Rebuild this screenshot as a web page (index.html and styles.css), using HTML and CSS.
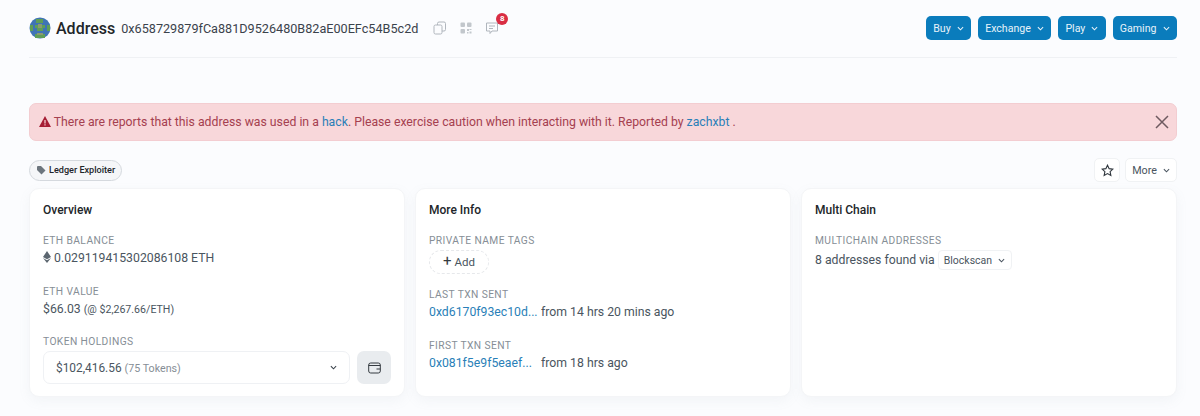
FILE: index.html
```html
<!DOCTYPE html>
<html lang="en">

<head>
    <meta charset="UTF-8">
    <title>Address</title>
    <link rel="stylesheet" href="styles.css">
</head>

<body>
    <div class="header">
        <div class="title">
            <svg class="avatar" width="22" height="22" viewBox="0 0 22 22">
                <circle cx="11" cy="11" r="10.500" fill="#3f74b5" />
                <path d="M7 2h7v4H7zM6 8h3v3H6zM13 8h3v3h-3zM8 11h6v3H8zM1 8h3v6H1zM18 8h3v6h-3zM6 17h10v4H6z" fill="#5f9e57" />
                <path d="M9 7h4v4H9zM8 16h6v2H8z" fill="#8a9a72" />
            </svg>
            <h1>Address</h1>
            <span class="hash">0x658729879fCa881D9526480B82aE00EFc54B5c2d</span>
            <svg class="tool" width="14" height="14" viewBox="0 0 14 14">
                <rect x="4.500" y="1" width="8" height="9" rx="1.500" />
                <rect x="1" y="4" width="8" height="9" rx="1.500" fill="#fbfcfe" />
            </svg>
            <svg class="tool solid" width="14" height="14" viewBox="0 0 14 14">
                <rect x="1.500" y="1.500" width="4.500" height="4.500" rx="1" />
                <rect x="8" y="1.500" width="4.500" height="4.500" rx="1" />
                <rect x="1.500" y="8" width="4.500" height="4.500" rx="1" />
                <path d="M8 8h2v2H8zM10.500 10.500h2v2h-2zM10.500 8h2v1h-2zM8 11h1.500v1.500H8z" />
            </svg>
            <span class="notes">
                <svg class="tool" width="14" height="14" viewBox="0 0 14 14">
                    <path d="M1.500 2h11v8H7l-2 2.500V10H1.500z" />
                    <path d="M4 5h6M4 7.500h4" />
                </svg>
                <span class="badge">8</span>
            </span>
        </div>
        <div class="menu">
            <button class="blue">Buy<svg class="chev" width="8" height="5" viewBox="0 0 8 5"><path d="M1 1l3 3 3-3" /></svg></button>
            <button class="blue">Exchange<svg class="chev" width="8" height="5" viewBox="0 0 8 5"><path d="M1 1l3 3 3-3" /></svg></button>
            <button class="blue">Play<svg class="chev" width="8" height="5" viewBox="0 0 8 5"><path d="M1 1l3 3 3-3" /></svg></button>
            <button class="blue">Gaming<svg class="chev" width="8" height="5" viewBox="0 0 8 5"><path d="M1 1l3 3 3-3" /></svg></button>
        </div>
    </div>

    <div class="alert">
        <p>
            <svg class="warn" width="12" height="11" viewBox="0 0 12 11">
                <path d="M6 0l6 11H0z" fill="#a61e35" />
                <path d="M5.400 4h1.200v3.500H5.400zM5.400 8.200h1.200v1.200H5.400z" fill="#f8d7da" />
            </svg>
            There are reports that this address was used in a <a>hack</a>. Please exercise caution when interacting with it. Reported by <a>zachxbt</a> .
        </p>
        <svg class="close" width="14" height="14" viewBox="0 0 14 14"><path d="M1 1l12 12M13 1L1 13" /></svg>
    </div>

    <div class="tags">
        <span class="tag">
            <svg width="10" height="10" viewBox="0 0 10 10"><path d="M0 1.500V5l4.500 4.500 4-4L4 1H.5z" fill="#6c757d" /></svg>
            Ledger Exploiter
        </span>
        <div class="actions">
            <button class="white star">
                <svg width="13" height="13" viewBox="0 0 14 14"><path d="M7 1.300l1.750 3.700 4 .5-2.950 2.800.8 4L7 10.300 3.400 12.300l.8-4L1.250 5.500l4-.5z" /></svg>
            </button>
            <button class="white">More<svg class="chev" width="8" height="5" viewBox="0 0 8 5"><path d="M1 1l3 3 3-3" /></svg></button>
        </div>
    </div>

    <div class="cards">
        <div class="card">
            <h2>Overview</h2>
            <div class="label">ETH BALANCE</div>
            <div class="value">
                <svg width="8" height="12" viewBox="0 0 8 12"><path d="M4 0l4 6-4 2.300L0 6zM0 7l4 2.300L8 7l-4 5z" fill="#5c6670" /></svg>
                0.029119415302086108 ETH
            </div>
            <div class="label">ETH VALUE</div>
            <div class="value">$66.03 <span class="small">(@ $2,267.66/ETH)</span></div>
            <div class="label">TOKEN HOLDINGS</div>
            <div class="holdings">
                <div class="select">
                    <span>$102,416.56 <span class="muted">(75 Tokens)</span></span>
                    <svg class="chev dark" width="8" height="5" viewBox="0 0 8 5"><path d="M1 1l3 3 3-3" /></svg>
                </div>
                <button class="wallet">
                    <svg width="13" height="12" viewBox="0 0 13 12">
                        <rect x=".7" y="1" width="11.600" height="10" rx="2" />
                        <path d="M.7 3.500h11.600M8.500 7h3.800" />
                    </svg>
                </button>
            </div>
        </div>
        <div class="card info">
            <h2>More Info</h2>
            <div class="label">PRIVATE NAME TAGS</div>
            <button class="add"><span class="plus">+</span> Add</button>
            <div class="label">LAST TXN SENT</div>
            <div class="value"><a class="txn">0xd6170f93ec10d...</a> from 14 hrs 20 mins ago</div>
            <div class="label">FIRST TXN SENT</div>
            <div class="value"><a class="txn">0x081f5e9f5eaef...</a> from 18 hrs ago</div>
        </div>
        <div class="card">
            <h2>Multi Chain</h2>
            <div class="label">MULTICHAIN ADDRESSES</div>
            <div class="value found">8 addresses found via
                <button class="white scan">Blockscan<svg class="chev" width="8" height="5" viewBox="0 0 8 5"><path d="M1 1l3 3 3-3" /></svg></button>
            </div>
        </div>
    </div>
</body>

</html>
```

FILE: styles.css
```css
* {
    margin: 0;
    padding: 0;
    box-sizing: border-box;
}

body {
    height: 416px;
    overflow: hidden;
    padding: 0 23px 0 29px;
    background-color: #fbfcfe;
    font-family: Roboto, "Liberation Sans", sans-serif;
    font-size: 12.250px;
    color: #4a5560;
}

button {
    font-family: inherit;
    border: none;
}

a {
    color: #2a7fb8;
}

.header {
    height: 58px;
    display: flex;
    justify-content: space-between;
    align-items: center;
    padding-bottom: 1px;
    border-bottom: solid 1px #eff1f4;
}

.title {
    display: flex;
    align-items: center;
}

.avatar {
    margin-right: 5px;
}

h1 {
    font-size: 16px;
    font-weight: 500;
    color: #212529;
    margin-right: 6px;
}

.hash {
    font-size: 12.650px;
    color: #3a424b;
    margin-right: 15px;
}

.tool {
    fill: none;
    stroke: #b0b6bd;
    stroke-width: 1;
    margin-right: 12px;
}

.tool.solid {
    fill: #c2c7cc;
    stroke: none;
}

.notes {
    position: relative;
    display: flex;
}

.badge {
    position: absolute;
    top: -8px;
    left: 11px;
    width: 12px;
    height: 12px;
    border-radius: 50%;
    background-color: #d92d43;
    color: #fff;
    font-size: 8px;
    font-weight: 700;
    line-height: 12px;
    text-align: center;
}

.menu {
    display: flex;
    gap: 7px;
}

.blue {
    height: 24px;
    padding: 0 7.500px 0 7px;
    display: flex;
    align-items: center;
    gap: 6px;
    border-radius: 5px;
    background-color: #0a7cbc;
    color: #e8f3fa;
    font-size: 10.600px;
}

.blue .chev,
.white .chev,
.select .chev {
    width: 7px;
}

.chev {
    fill: none;
    stroke: currentColor;
    stroke-width: 1.200;
}

.chev.dark {
    stroke: #3a424b;
}

.alert {
    height: 38px;
    margin-top: 45px;
    padding: 0 7px 0 9px;
    display: flex;
    justify-content: space-between;
    align-items: center;
    background-color: #f8d7da;
    border: solid 1px #f3cdd1;
    border-radius: 7px;
    color: #a5404f;
    font-size: 12.250px;
}

.warn {
    vertical-align: -1px;
}

.close {
    fill: none;
    stroke: #6e5a60;
    stroke-width: 1.500;
}

.tags {
    height: 24px;
    margin-top: 17px;
    display: flex;
    justify-content: space-between;
    align-items: center;
}

.tag {
    height: 21px;
    padding: 0 6px 0 7px;
    display: flex;
    align-items: center;
    gap: 2px;
    border: solid 1px #d5d9de;
    border-radius: 11px;
    background-color: #f5f6f8;
    color: #212529;
    font-size: 9.100px;
    font-weight: 500;
}

.actions {
    display: flex;
    gap: 5px;
}

.white {
    height: 24px;
    display: flex;
    align-items: center;
    gap: 6px;
    padding: 0 6px;
    border: solid 1px #f0f2f4;
    border-radius: 5px;
    background-color: #fff;
    color: #4a5560;
    font-size: 10.750px;
}

.star {
    width: 26px;
    justify-content: center;
    padding: 0;
}

.star svg {
    fill: none;
    stroke: #2f363d;
    stroke-width: 1.200;
}

.cards {
    margin-top: 6px;
    display: flex;
    gap: 10px;
}

.card {
    width: 376px;
    height: 209px;
    padding: 14px 13px;
    background-color: #fff;
    border: solid 1px #f4f5f7;
    border-radius: 10px;
    box-shadow: 0 4px 12px rgba(140, 152, 164, .08);
}

h2 {
    font-size: 12px;
    font-weight: 500;
    line-height: 14px;
    color: #212529;
    margin-bottom: 18px;
}

.label {
    font-size: 10.250px;
    letter-spacing: .4px;
    line-height: 12px;
    color: #868e96;
    margin-bottom: 3px;
}

.value {
    line-height: 17px;
    margin-bottom: 18.700px;
}

.info .value {
    margin-bottom: 18.500px;
}

.value svg {
    vertical-align: -1px;
}

.small {
    font-size: 10.600px;
}

.holdings {
    display: flex;
    gap: 7px;
}

.select {
    flex: 1;
    height: 33px;
    padding: 0 12px;
    display: flex;
    justify-content: space-between;
    align-items: center;
    border: solid 1px #eff1f4;
    border-radius: 7px;
    font-size: 11.900px;
}

.muted {
    font-size: 10.700px;
    color: #868e96;
}

.wallet {
    width: 34px;
    height: 33px;
    display: flex;
    justify-content: center;
    align-items: center;
    border-radius: 7px;
    background-color: #e9ecef;
}

.wallet svg {
    fill: none;
    stroke: #343a40;
    stroke-width: 1;
}

.add {
    display: block;
    width: 60px;
    height: 24px;
    margin-top: 1px;
    margin-bottom: 15px;
    border: dashed 1px #e6e8eb;
    border-radius: 12px;
    background-color: #fff;
    color: #4a5560;
    font-size: 11.500px;
}

.plus {
    font-size: 15px;
    color: #343a40;
    line-height: 12px;
}

.txn {
    display: inline-block;
    width: 109px;
}

.found {
    display: flex;
    align-items: center;
    gap: 3px;
}

.scan {
    height: 20px;
    padding: 0 6px 0 5px;
    gap: 6px;
    border-radius: 4px;
    font-size: 10.500px;
}
```
